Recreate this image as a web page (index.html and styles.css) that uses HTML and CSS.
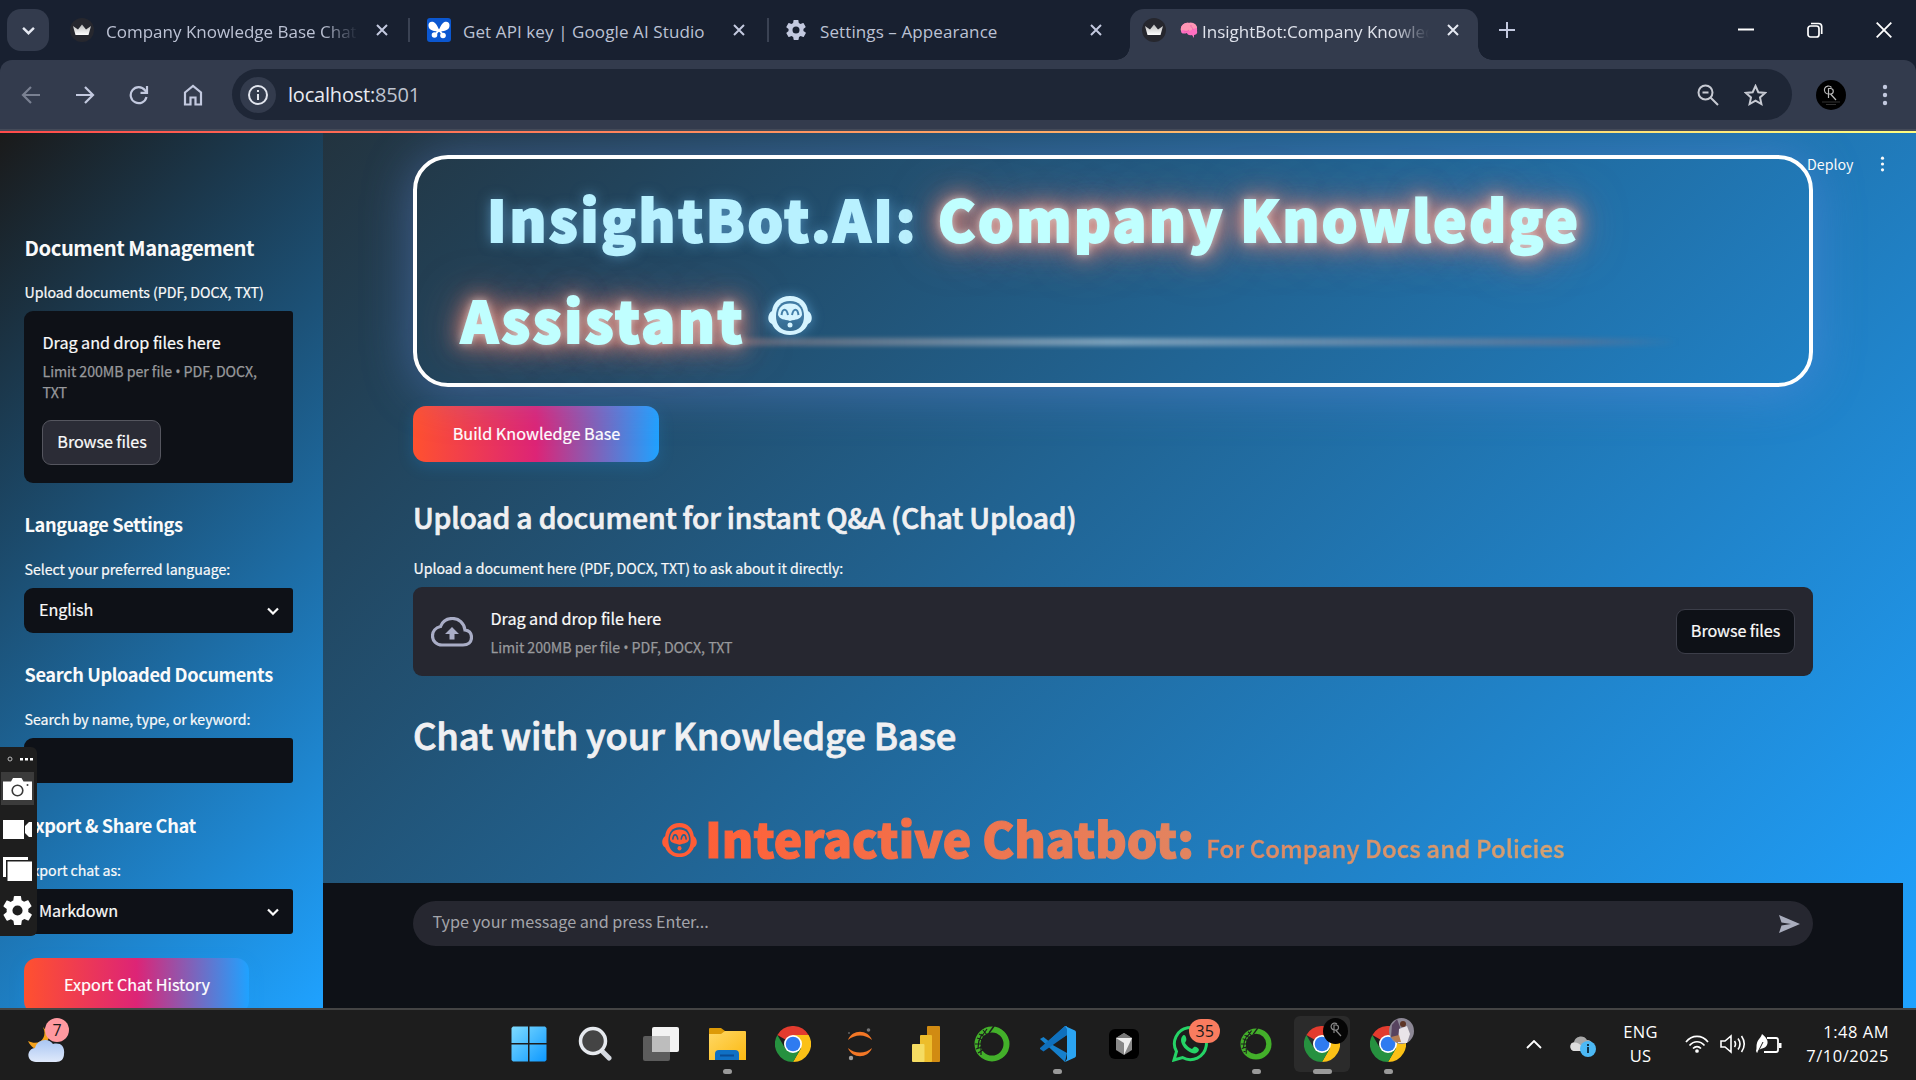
FILE: index.html
```html
<!DOCTYPE html>
<html lang="en">
<head>
<meta charset="utf-8">
<title>InsightBot: Company Knowledge Assistant</title>
<link rel="stylesheet" href="styles.css">
</head>
<body>
<svg class="defs" width="0" height="0" aria-hidden="true">
  <defs>
    <linearGradient id="gWin" x1="0" y1="0" x2="1" y2="1"><stop offset="0" stop-color="#7fdcff"/><stop offset="1" stop-color="#0d98ff"/></linearGradient>
    <linearGradient id="gFold" x1="0" y1="0" x2="1" y2="1"><stop offset="0" stop-color="#ffd865"/><stop offset="1" stop-color="#fcb911"/></linearGradient>
    <linearGradient id="gCloud" x1="0" y1="0" x2="0" y2="1"><stop offset="0" stop-color="#a9c6f3"/><stop offset="1" stop-color="#dfe9fb"/></linearGradient>
    <linearGradient id="gCrown" x1="0" y1="0" x2="0" y2="1"><stop offset="0" stop-color="#b9b9b9"/><stop offset="1" stop-color="#ffffff"/></linearGradient>
    <mask id="face">
      <path d="M22 0C33 0 39 7 40 15C45 18 45 26 40 28C37 35 30 39 22 39S7 35 4 28C-1 26-1 18 4 15C5 7 11 0 22 0Z" fill="#fff"/>
      <path d="M22 5C31 5 36 11 36 20S31 35 22 35S8 29 8 20S13 5 22 5Z" fill="#000"/>
      <path d="M22 7.500C30 7.500 34 12 34 19C32 24 28 23 22 25C16 23 12 24 10 19C10 12 14 7.500 22 7.500Z" fill="#fff"/>
      <path d="M13.500 19C14.500 12 18.500 12 20 19M24 19C25.500 12 29.500 12 30.500 19" fill="none" stroke="#000" stroke-width="2"/>
      <circle cx="22" cy="29" r="2.500" fill="#fff"/>
    </mask>
    <symbol id="monkey" viewBox="0 0 44 39"><rect width="44" height="39" fill="currentColor" mask="url(#face)"/></symbol>
    <symbol id="crown" viewBox="0 0 24 24"><circle cx="12" cy="12" r="12" fill="#26272e"/><path d="M3 8L8 11.500L12 6.500L16 11.500L21 8L18.500 17H5.500Z" fill="url(#gCrown)"/></symbol>
    <symbol id="x" viewBox="0 0 12 12"><path d="M1 1L11 11M11 1L1 11" stroke="currentColor" stroke-width="2" fill="none"/></symbol>
    <symbol id="gear" viewBox="2 2 20 20"><path fill="currentColor" fill-rule="evenodd" d="M19.400 13c0-.300.100-.600.100-1s0-.700-.100-1l2.100-1.700c.200-.100.300-.400.100-.600l-2-3.500c-.100-.200-.400-.300-.600-.200l-2.500 1c-.500-.400-1.100-.700-1.700-1l-.400-2.600C14.500 2.200 14.200 2 14 2h-4c-.300 0-.500.200-.500.400l-.400 2.700c-.600.200-1.100.600-1.700 1L5 5.100c-.200-.100-.500 0-.600.200l-2 3.500c-.100.200-.100.500.100.600L4.600 11c0 .300-.100.700-.100 1s0 .700.100 1l-2.100 1.700c-.200.100-.300.400-.100.600l2 3.500c.100.200.400.300.600.200l2.500-1c.500.400 1.100.700 1.700 1l.400 2.600c0 .200.200.400.500.400h4c.300 0 .500-.200.500-.400l.400-2.700c.600-.200 1.100-.600 1.700-1l2.500 1c.200.100.500 0 .600-.200l2-3.500c.100-.200.100-.500-.100-.600zM12 15.500a3.500 3.500 0 1 1 0-7a3.500 3.500 0 0 1 0 7z"/></symbol>
    <symbol id="dots" viewBox="0 0 6 22"><circle cx="3" cy="3" r="2.200" fill="currentColor"/><circle cx="3" cy="11" r="2.200" fill="currentColor"/><circle cx="3" cy="19" r="2.200" fill="currentColor"/></symbol>
    <symbol id="chev" viewBox="0 0 12 8"><path d="M1 1.500L6 6.500L11 1.500" fill="none" stroke="currentColor" stroke-width="2.200"/></symbol>
    <symbol id="chrome" viewBox="0 0 36 36">
      <path d="M18 18L2.400 9A18 18 0 0 1 33.600 9Z" fill="#e33b2e"/>
      <path d="M18 9H33.600A18 18 0 0 1 18 36L25.800 22.500Z" fill="#fbc116"/>
      <path d="M2.400 9L10.200 22.500L25.800 22.500L18 36A18 18 0 0 1 2.400 9Z" fill="#26913f"/>
      <circle cx="18" cy="18" r="9" fill="#fff"/><circle cx="18" cy="18" r="7.300" fill="#2f7bf0"/>
    </symbol>
    <symbol id="conda" viewBox="0 0 36 36"><circle cx="18" cy="18" r="14.500" fill="none" stroke="#43b02a" stroke-width="6"/><path d="M3 12L9 14M5 8L11 11M9 4L13 9M1 18L7 18M2 23L8 21M4 27L9 24M8 8L5 15M13 3L8 10M5 14L4 22M7 20L7 29" stroke="#1d1d1d" stroke-width="1.200"/><path d="M20 0L15 7" stroke="#1d1d1d" stroke-width="1.500"/></symbol>
  </defs>
</svg>

<header class="tabs">
  <div class="tabsearch"><svg width="13" height="9"><use href="#chev"/></svg></div>
  <div class="tab t1"><svg class="fav" width="24" height="24"><use href="#crown"/></svg><span class="title fade ui">Company Knowledge Base Chat</span><svg class="cl" width="12" height="12"><use href="#x"/></svg></div>
  <div class="tab t2"><svg class="fav" width="24" height="24" viewBox="0 0 24 24"><rect width="24" height="24" rx="3" fill="#0b57d0"/><path d="M12 14C8 13 2 13 1.500 8C1 3 6 3 8 5C10 7 11 9 12 12C13 9 14 7 16 5C18 3 23 3 22.500 8C22 13 16 13 12 14Z" fill="#fff"/><circle cx="7.500" cy="17" r="2.800" fill="#fff"/><circle cx="16" cy="17.500" r="2.800" fill="#fff"/><path d="M8 17L12 12L16 17" fill="none" stroke="#fff" stroke-width="2"/></svg><span class="title ui">Get API key | Google AI Studio</span><svg class="cl" width="12" height="12"><use href="#x"/></svg></div>
  <div class="tab t3"><svg class="fav" width="20" height="20"><use href="#gear"/></svg><span class="title ui">Settings – Appearance</span><svg class="cl" width="12" height="12"><use href="#x"/></svg></div>
  <div class="tab t4"><svg class="fav" width="24" height="24"><use href="#crown"/></svg>
    <svg class="brain" width="18" height="17" viewBox="0 0 18 17"><path d="M1 9C0 4 4 0 9 1C14 0 18 4 17 9C18 12 15 13 14 13L14 16L12 13C9 14 7 12 7 11C4 12 1 12 1 9Z" fill="#ff6fc0"/><path d="M1 9C0 4 4 0 9 1C14 0 17 3 17 6C13 6 12 9 8 9S4 7 1 9Z" fill="#ff96b4"/><path d="M11 3C10 5 13 5 13 8M4 10C6 9 7 10 9 8" fill="none" stroke="#ee5cb0" stroke-width=".8"/></svg>
    <span class="title fade ui">InsightBot:Company Knowledge</span><svg class="cl" width="12" height="12"><use href="#x"/></svg></div>
  <svg class="plus" width="16" height="16" viewBox="0 0 16 16"><path d="M8 0V16M0 8H16" stroke="#c3c9df" stroke-width="2"/></svg>
  <div class="winctl">
    <svg width="16" height="16" viewBox="0 0 16 16"><path d="M0 7.500H16" stroke="#fff" stroke-width="2"/></svg>
    <svg width="16" height="16" viewBox="0 0 16 16" fill="none" stroke="#fff" stroke-width="1.700"><rect x="1" y="4" width="11" height="11" rx="2.500"/><path d="M4 1.500H11.500C14 1.500 14.700 3 14.700 4.500V12"/></svg>
    <svg width="16" height="16" viewBox="0 0 16 16"><path d="M.7 .7L15.300 15.300M15.300 .7L.7 15.300" stroke="#fff" stroke-width="1.800"/></svg>
  </div>
</header>

<div class="toolbarwrap"><div class="toolbar">
  <svg class="nav dim" viewBox="0 0 20 20"><path d="M19 10H2M10 2L2 10L10 18"/></svg>
  <svg class="nav" viewBox="0 0 20 20"><path d="M1 10H18M10 2L18 10L10 18"/></svg>
  <svg class="nav" viewBox="0 0 20 20"><path d="M17.500 12A8 8 0 1 1 16 5.200L18 7.500M18 1V7.800H11.500"/></svg>
  <svg class="nav" viewBox="0 0 20 22"><path d="M2 8.500L10 2L18 8.500V20.500H12.500V13.500H7.500V20.500H2Z"/></svg>
  <div class="omni">
    <div class="info"><svg width="20" height="20" viewBox="0 0 20 20"><circle cx="10" cy="10" r="9" fill="none" stroke="#e2e5ee" stroke-width="2"/><path d="M10 9V15M10 5V7" stroke="#e2e5ee" stroke-width="2"/></svg></div>
    <span class="url ui">localhost:<i>8501</i></span>
    <svg class="mag" width="22" height="22" viewBox="0 0 22 22" fill="none" stroke="#c7cad3" stroke-width="2"><circle cx="8.500" cy="8.500" r="7"/><path d="M5.500 8.500H11.500M13.500 13.500L21 21"/></svg>
    <svg class="star" width="23" height="22" viewBox="0 0 23 22"><path d="M11.500 2L14.300 8.200L21 8.900L16 13.400L17.400 20L11.500 16.600L5.600 20L7 13.400L2 8.900L8.700 8.200Z" fill="none" stroke="#c7cad3" stroke-width="2"/></svg>
  </div>
  <svg class="avatar" width="30" height="30" viewBox="0 0 30 30"><circle cx="15" cy="15" r="15" fill="#000"/><path d="M15.500 7.500A4 4 0 1 0 12.500 14M12.500 18V8.500H15A2.800 2.800 0 0 1 15 14H12.500M14.500 14L20 20" fill="none" stroke="#bbb" stroke-width="1.200"/><path d="M6 22H24M10 24.500H20" stroke="#333" stroke-width="1"/></svg>
  <svg class="menu" width="6" height="22"><use href="#dots"/></svg>
</div></div>

<div class="app">
  <div class="deco"></div>
  <aside class="side">
    <h2 class="h-a">Document Management</h2>
    <p class="lab">Upload documents (PDF, DOCX, TXT)</p>
    <div class="drop">
      <div class="drag">Drag and drop files here</div>
      <div class="limit">Limit 200MB per file <i>•</i> PDF, DOCX,<br>TXT</div>
      <button class="browse">Browse files</button>
    </div>
    <h3 class="h-b">Language Settings</h3>
    <p class="lab">Select your preferred language:</p>
    <div class="field"><span>English</span><svg width="12" height="8"><use href="#chev"/></svg></div>
    <h3 class="h-b">Search Uploaded Documents</h3>
    <p class="lab">Search by name, type, or keyword:</p>
    <div class="field"></div>
    <h3 class="h-b last">Export &amp; Share Chat</h3>
    <p class="lab">Export chat as:</p>
    <div class="field"><span>Markdown</span><svg width="12" height="8"><use href="#chev"/></svg></div>
    <button class="grad exp">Export Chat History</button>
  </aside>
  <main class="main">
    <div class="scroll">
      <div class="hero">
        <div class="shine"></div>
        <h1><span class="ib">InsightBot.AI:</span><span class="ck">Company Knowledge</span><br><span class="ck as">Assistant</span><svg class="bot" width="44" height="39"><use href="#monkey"/></svg></h1>
      </div>
      <button class="grad build">Build Knowledge Base</button>
      <h3 class="up">Upload a document for instant Q&amp;A (Chat Upload)</h3>
      <p class="lab">Upload a document here (PDF, DOCX, TXT) to ask about it directly:</p>
      <div class="bigdrop">
        <svg class="cloud" width="42" height="30" viewBox="0 0 42 30"><path d="M11 28H32C37 28 40.500 25 40.500 20.500C40.500 16 37.500 13.500 34 13C33 6 28 1.500 21.500 1.500C16 1.500 11.500 4.500 9.500 9.500C4.500 10.500 1.500 14.500 1.500 19C1.500 24 5.500 28 11 28Z" fill="none" stroke="#a9adc6" stroke-width="3.200"/><path d="M21 10L28 17H23.500V22.500H18.500V17H14Z" fill="#a9adc6"/></svg>
        <div class="dt"><div class="drag">Drag and drop file here</div><div class="limit">Limit 200MB per file <i>•</i> PDF, DOCX, TXT</div></div>
        <button class="browse dark">Browse files</button>
      </div>
      <h2 class="chat">Chat with your Knowledge Base</h2>
      <div class="inter"><svg width="35" height="34" viewBox="0 0 44 39" preserveAspectRatio="none"><use href="#monkey" width="44" height="39"/></svg><div class="it"><b>Interactive Chatbot:</b><span>For Company Docs and Policies</span></div></div>
    </div>
    <div class="bottom"><div class="msg"><span>Type your message and press Enter...</span><svg width="21" height="18" viewBox="0 0 21 18"><path d="M0 0L21 9L0 18L2.500 10.500L12 9L2.500 7.500Z" fill="#a9adbd"/></svg></div></div>
  </main>
  <div class="deploy"><span>Deploy</span><svg width="5" height="16"><use href="#dots"/></svg></div>
  <div class="recorder">
    <svg class="grip" width="28" height="8" viewBox="0 0 28 8"><circle cx="5" cy="4" r="2" fill="none" stroke="#bbb"/><path d="M15 3h3v2.500h-3zM20 3h3v2.500h-3zM25 3h3v2.500h-3z" fill="#fff"/></svg>
    <div class="cam"><svg width="29" height="22" viewBox="0 0 29 22"><path d="M0 3.500H8L10 0H18.500L20.500 3.500H29V22H0Z" fill="#fff"/><circle cx="14.500" cy="12.500" r="5.300" fill="none" stroke="#3a3a3a" stroke-width="1.600"/><circle cx="24.500" cy="7" r="1" fill="#3a3a3a"/></svg></div>
    <svg class="vid" width="29" height="19" viewBox="0 0 29 19"><path d="M0 0H21V7L26 2H29V17H26L21 12V19H0Z" fill="#fff"/><path d="M21.500 0V19" stroke="#1e1e1e"/></svg>
    <svg class="lay" width="29" height="24" viewBox="0 0 29 24"><path d="M0 0H25V3H3V20H0Z" fill="#fff"/><rect x="4.500" y="4.500" width="24.500" height="19.500" fill="#fff"/></svg>
    <svg class="set" width="29" height="29"><use href="#gear"/></svg>
  </div>
</div>

<footer class="task">
  <div class="weather"><svg width="37" height="36" viewBox="0 0 37 36"><path d="M15 0C20 10 12 20 0 14C4 22 10 24 16 22L22 8Z" fill="#f5a21b"/><path d="M8 35C-2 35-2 22 7 21C9 13 20 10 25 17C33 15 37 20 36 27C36 32 33 35 28 35Z" fill="url(#gCloud)"/></svg><span class="badge pink">7</span></div>
  <div class="apps">
    <div class="slot"><svg width="36" height="36" viewBox="0 0 36 36"><path d="M2 .5H17V17H.5V2ZM18.500 .5H34L35.500 2V17H18.500ZM.5 18.500H17V35.500H2L.5 34ZM18.500 18.500H35.500V34L34 35.500H18.500Z" fill="url(#gWin)"/></svg></div>
    <div class="slot"><svg width="34" height="36" viewBox="0 0 34 36"><path d="M23 24L31 32" stroke="#d4d8df" stroke-width="5" stroke-linecap="round"/><circle cx="15" cy="15" r="12.500" fill="#444" stroke="#e6e9ee" stroke-width="3.500"/></svg></div>
    <div class="slot"><svg width="36" height="36" viewBox="0 0 36 36"><rect x="0" y="10" width="27" height="25" rx="2" fill="#5c5c5c"/><rect x="9" y="1" width="27" height="25" rx="2" fill="#f3f3f3"/><path d="M9 10H27V26H9Z" fill="#bdbdbd"/></svg></div>
    <div class="slot"><svg width="37" height="34" viewBox="0 0 37 34"><path d="M0 2Q0 1 1 1H12L16 4V8H0Z" fill="#dd9a07"/><path d="M0 7H12L16 4H36Q37 4 37 5V33H0Z" fill="url(#gFold)"/><path d="M6 33V27Q6 23 10 23H26Q30 23 30 27V33Z" fill="#0f70c4"/><path d="M11 28.500H25" stroke="#0a4c94" stroke-width="2"/></svg><i class="ind"></i></div>
    <div class="slot"><svg width="36" height="36"><use href="#chrome"/></svg></div>
    <div class="slot"><svg width="28" height="36" viewBox="0 0 28 36"><path d="M2 14C6 3 22 3 26 14C19 8 9 8 2 14ZM2 22C6 33 22 33 26 22C19 28 9 28 2 22Z" fill="#f37726"/><circle cx="22.500" cy="4" r="1.800" fill="#767677"/><circle cx="3" cy="7" r="1" fill="#616262"/><circle cx="5" cy="32" r="2.200" fill="#9e9e9e"/></svg></div>
    <div class="slot"><svg width="28" height="36" viewBox="0 0 28 36"><rect x="15" y="0" width="13" height="36" rx="1" fill="#d18b12"/><rect x="8" y="9" width="12" height="27" rx="1" fill="#edbd2c"/><rect x="0" y="18" width="12.500" height="18" rx="1" fill="#f5dc62"/></svg></div>
    <div class="slot"><svg width="36" height="36"><use href="#conda"/></svg></div>
    <div class="slot"><svg width="36" height="36" viewBox="0 0 36 36"><path d="M25 0L8.500 15L3.500 11L0 13L25 36L27 27L11 18L27 9Z" fill="#1680cc"/><path d="M0 23L3.500 25.500L27 9V0H25L0 22Z" fill="#0f70bd"/><path d="M25 0L35 4.500Q36 5 36 6.500V29.500Q36 31 35 31.500L25 36L27 33V3Z" fill="#2ba4f2"/></svg><i class="ind"></i></div>
    <div class="slot"><svg width="30" height="30" viewBox="0 0 30 30"><rect width="30" height="30" rx="6" fill="#000"/><path d="M15 4L23 9V21L15 26L7 21V9Z" fill="#888"/><path d="M7 9H23L15 26V14Z" fill="#eee"/><path d="M15 4L23 9H7Z" fill="#777"/></svg></div>
    <div class="slot"><svg width="36" height="36" viewBox="0 0 36 36"><path d="M2 34L4.500 25.500A16 16 0 1 1 10.500 31.500Z" fill="#1d1d1d" stroke="#25d366" stroke-width="3"/><path d="M12 9C14 9 15 14 14 15L13 17C15 20 17 22 20 23L22 21C23 20 27 22 27 24C26 27 23 28 20 27C14 25 9 19 9 14C9 11 11 9 12 9Z" fill="#25d366"/></svg><span class="badge b35">35</span></div>
    <div class="slot"><svg width="32" height="32"><use href="#conda"/></svg><i class="ind"></i></div>
    <div class="slot"><div class="active"></div><svg width="36" height="36"><use href="#chrome"/></svg><svg class="av" width="25" height="26" viewBox="0 0 25 26"><ellipse cx="12.500" cy="13" rx="12.500" ry="13" fill="#050505"/><path d="M14 6A3.500 3.500 0 1 0 11 12M11 15V7H13A2.500 2.500 0 0 1 13 12H11M12.500 12L18 18" fill="none" stroke="#888" stroke-width="1.200"/></svg><i class="ind wide"></i></div>
    <div class="slot"><svg width="36" height="36"><use href="#chrome"/></svg><svg class="av" width="25" height="26" viewBox="0 0 25 26"><ellipse cx="12.500" cy="13" rx="12.500" ry="13" fill="#8d8896"/><path d="M3 7L8 1L11 9L9 23L2 19Z" fill="#57435f"/><path d="M10 11L18 8L21 16L18 25L9 25Z" fill="#e9e4e9"/><circle cx="14" cy="6" r="3" fill="#5d3526"/><path d="M2 19L10 17L12 24L7 24Z" fill="#b47c53"/></svg><i class="ind"></i></div>
  </div>
  <div class="tray">
    <svg class="up1" width="16" height="9" viewBox="0 0 16 9"><path d="M1 8L8 1L15 8" fill="none" stroke="#fff" stroke-width="1.800"/></svg>
    <svg class="onedrive" width="26" height="22" viewBox="0 0 26 22"><path d="M5 16C-1 16-1 8 4 7C5 1 14-1 17 5C21 5 23 8 22 12V16Z" fill="#a8a8a8"/><path d="M2 8C8 6 12 10 14 16H5C-1 16 0 9 2 8Z" fill="#dedede"/><circle cx="18" cy="14" r="8" fill="#4cb9f5"/><path d="M18 12V18M18 9V11" stroke="#10344a" stroke-width="2"/></svg>
    <div class="lang ui">ENG<br>US</div>
    <svg class="wifi" width="24" height="18" viewBox="0 0 24 18" fill="none" stroke="#fff" stroke-width="1.700"><path d="M1 7C7-.5 17-.5 23 7M4.500 10.500C9 5.500 15 5.500 19.500 10.500M8 13.500C10.500 11 13.500 11 16 13.500"/><circle cx="12" cy="16" r="1" fill="#fff"/></svg>
    <svg class="vol" width="26" height="20" viewBox="0 0 26 20" fill="none" stroke="#fff" stroke-width="1.600"><path d="M1 7H5L11 2V18L5 13H1ZM14.500 7Q16.500 10 14.500 13M18 4.500Q22 10 18 15.500M21.500 2Q27 10 21.500 18"/></svg>
    <svg class="bat" width="26" height="20" viewBox="0 0 26 20"><path d="M11 4H20Q22 4 22 6V16Q22 18 20 18H8" fill="none" stroke="#fff" stroke-width="1.800"/><path d="M23 9H25.500V14H23Z" fill="#fff"/><path d="M6 0C10 3 13 7 11 11C9 15 5 14 3 16L1 19L0 17C1 14 0 12 1 9C2 5 5 4 6 0Z" fill="#fff"/><path d="M2 18L7 8" stroke="#1d1d1d"/></svg>
    <div class="clock ui">1:48 AM<br>7/10/2025</div>
  </div>
</footer>
</body>
</html>
```
FILE: styles.css
```css
* { box-sizing: border-box; }
body { margin: 0; width: 1916px; height: 1080px; overflow: hidden; background: #182030; font-family: "Noto Sans CJK SC", "Noto Sans", sans-serif; color: #fafafa; }
h1, h2, h3, p { margin: 0; white-space: nowrap; }
svg { display: block; flex: none; }
button { border: 0; padding: 0; font: inherit; color: inherit; display: flex; align-items: center; justify-content: center; }
.defs { position: absolute; }
.ui { font-family: "Open Sans", "Noto Sans", sans-serif; white-space: nowrap; }

/* Browser tabs */
.tabs { height: 60px; display: flex; align-items: center; padding-left: 7px; background: #182030; color: #c3c9df; }
.tabsearch { width: 42px; height: 42px; border-radius: 14px; background: #333b4d; display: flex; align-items: center; justify-content: center; margin-right: 9px; }
.tabsearch svg { color: #e6e9f2; }
.tab { height: 51px; margin-top: 9px; display: flex; align-items: center; padding: 0 22px 9px 12px; position: relative; font-size: 17px; line-height: 24px; }
.tab .fav { margin-right: 12px; }
.tab .title { flex: 1; width: 0; overflow: hidden; color: #bcc2d4; margin-top: 3px; letter-spacing: .1px; }
.fade { mask-image: linear-gradient(90deg, #000 calc(100% - 36px), transparent); }
.t1 { width: 352px; }
.tab.t1 .title { flex: none; width: 252px; margin-right: 18px; letter-spacing: 0; }
.t2 { width: 359px; padding: 0 24px 9px 17px; }
.t3 { width: 361px; padding: 0 28px 9px 17px; }
.t1::after, .t2::after { content: ""; position: absolute; right: 0; top: 9px; width: 2px; height: 24px; background: #3a4253; }
.t3 .fav { margin: 0 14px 0 0; }
.t4 { width: 348px; background: #333b4d; border-radius: 14px 14px 0 0; color: #e6e9f2; padding: 0 18px 9px 12px; }
.tab.t4 .title { flex: none; width: 227px; color: #e0e3ec; margin-right: 18px; letter-spacing: 0; }
.t4 .fav { margin-right: 14px; }
.brain { margin-right: 4px; }
.t4::before, .t4::after { content: ""; position: absolute; bottom: 0; width: 14px; height: 14px; }
.t4::before { left: -14px; background: radial-gradient(circle at 0 0, transparent 13.500px, #333b4d 14px); }
.t4::after { right: -14px; background: radial-gradient(circle at 100% 0, transparent 13.500px, #333b4d 14px); }
.plus { margin-left: 21px; }
.winctl { margin-left: auto; display: flex; gap: 53px; padding-right: 24px; }

/* Address bar */
.toolbarwrap { background: #182030; }
.toolbar { height: 71px; background: #333b4d; border-radius: 12px 12px 0 0; border-bottom: 2px solid #444a58; display: flex; align-items: center; padding-left: 21px; }
.nav { width: 20px; height: 22px; margin-right: 34px; fill: none; stroke: #c3c9df; stroke-width: 2.200; }
.nav.dim { stroke: #7a8192; }
.omni { width: 1560px; height: 51px; border-radius: 26px; background: #1e2636; display: flex; align-items: center; margin: 0 24px 0 -5px; padding: 0 25px 0 8px; }
.info { width: 36px; height: 36px; border-radius: 50%; background: #333b4d; display: flex; align-items: center; justify-content: center; margin-right: 12px; }
.url { font-size: 20px; line-height: 28px; color: #e9ebf2; letter-spacing: -.2px; }
.url i { font-style: normal; color: #bfc3cf; }
.mag { margin-left: auto; margin-right: 25px; }
.menu { margin-left: 36px; color: #c3c9df; }

/* App */
.app { position: relative; height: 877px; display: flex; overflow: hidden; background: linear-gradient(135deg, #232526 0%, #1fa2ff 100%); }
.deco { position: absolute; left: 0; top: 0; width: 100%; height: 2px; background: linear-gradient(90deg, #ff4b4b, #fffd80); z-index: 3; }
.side { width: 323px; height: 877px; padding: 101px 30px 0 24px; background: linear-gradient(135deg, #1a1a1a 0%, #1fa2ff 100%); flex: none; overflow: hidden; }
.h-a { height: 30px; line-height: 32px; font-size: 20.250px; font-weight: 600; margin-bottom: 20px; letter-spacing: -.47px; padding-left: .5px; }
.h-b { height: 26px; line-height: 27px; font-size: 18.200px; font-weight: 600; margin: 28px 0 22px; letter-spacing: -.4px; padding-left: .5px; }
.h-b.last { margin-top: 29px; }
.lab { height: 20px; line-height: 21px; font-size: 14.200px; margin-bottom: 9px; padding-left: .5px; white-space: nowrap; letter-spacing: -.04px; -webkit-text-stroke: .2px; }
.drop { height: 172px; background: #0e1117; border-radius: 9px 3px 3px 9px; padding: 20px 19px 0 18.500px; }
.drag { height: 22px; line-height: 22px; font-size: 16.200px; white-space: nowrap; letter-spacing: -.05px; -webkit-text-stroke: .2px; }
.limit { line-height: 20px; font-size: 14.200px; margin-top: 8px; color: #98999c; white-space: nowrap; letter-spacing: -.05px; -webkit-text-stroke: .25px; }
.limit i { font-family: "Open Sans", sans-serif; font-style: normal; }
.browse { width: 119px; height: 45px; margin: 18px 0 0 -.5px; padding: 0 0 3px 1px; border: 1px solid #55565f; border-radius: 9px; background: #2b2c36; font-size: 16.200px; letter-spacing: -.1px; -webkit-text-stroke: .2px; }
.field { height: 45px; background: #0e1117; border-radius: 9px 3px 3px 9px; display: flex; align-items: center; justify-content: space-between; padding: 0 14px 0 15px; font-size: 16.200px; letter-spacing: -.1px; -webkit-text-stroke: .2px; }
.field span { margin-bottom: 3px; }
.grad { height: 56px; padding: 0 0 3px 1px; border-radius: 13px; background: linear-gradient(90deg, #ff512f, #dd2476 50%, #1fa2ff); box-shadow: 0 4px 16px rgba(31, 162, 255, .2); font-size: 16.200px; color: #fff; -webkit-text-stroke: .2px; }
.exp { width: 225px; margin-top: 24px; padding-bottom: 5px; }

.main { width: 1580px; display: flex; flex-direction: column; }
.scroll { height: 752px; padding: 24px 90px 0; width: 1593px; overflow: hidden; }
.hero { position: relative; width: 1400px; height: 232px; border: 4px solid #fff; border-radius: 35px; box-shadow: 0 4px 50px rgba(110, 145, 235, .42); padding: 8px 0 0 44px; }
.hero h1 { position: relative; font-size: 56px; line-height: 101px; font-weight: 900; letter-spacing: 2.550px; -webkit-text-stroke: 2px; }
.ib { margin-left: 26px; margin-right: 20px; letter-spacing: 2.800px; color: #b8f1ff; text-shadow: 0 0 14px rgba(120, 200, 255, .6); }
.ck { color: #c0ffff; text-shadow: 0 0 9px rgba(225, 230, 230, .8), 0 0 20px rgba(245, 140, 120, .9), 0 0 28px rgba(240, 135, 115, .9), 0 0 50px rgba(230, 130, 120, .75); }
.as { letter-spacing: 2.750px; }
.bot { display: inline-block; color: #d5f4ff; margin-left: 23px; vertical-align: 8px; filter: drop-shadow(0 0 6px rgba(120, 200, 255, .6)); }
.shine { position: absolute; left: 130px; right: 130px; bottom: 37px; height: 8px; filter: blur(2px); background: linear-gradient(90deg, transparent, rgba(255, 120, 90, .2) 10%, rgba(255, 255, 255, .4) 50%, rgba(255, 120, 90, .2) 90%, transparent); }
.build { width: 246px; margin-top: 19px; }
.up { height: 40px; line-height: 40px; font-size: 28.350px; font-weight: 500; margin: 35px 0 21px; color: #f0f0f2; letter-spacing: -.18px; -webkit-text-stroke: .7px; }
.bigdrop { width: 1400px; height: 89px; border-radius: 9px; background: #262730; display: flex; align-items: center; padding: 0 18px; }
.dt { margin: 1px 0 0 17.500px; flex: 1; }
.bigdrop .limit { margin-top: 8px; }
.dark { background: #0e1117; margin: 0; border-color: #3c3e49; padding-left: 0; }
.chat { height: 50px; line-height: 50px; font-size: 36.400px; font-weight: 500; margin: 33px 0 48px; color: #f0f0f2; letter-spacing: -.18px; -webkit-text-stroke: .8px; }
.inter { height: 60px; display: flex; align-items: center; padding-left: 249px; color: #ff5c36; }
.inter svg { margin-top: 6px; }
.it { margin-left: 8px; margin-top: 14px; white-space: nowrap; line-height: 60px; background: linear-gradient(90deg, #ff6038, #e28460 56%, #d3a172); background-clip: text; color: transparent; }
.it b { font-size: 48px; font-weight: 900; margin-right: 12px; letter-spacing: 0; -webkit-text-stroke: 1.200px transparent; }
.it span { font-size: 24px; font-weight: 500; letter-spacing: .07px; -webkit-text-stroke: .4px transparent; }
.bottom { height: 125px; background: #0e1117; padding: 18px 90px 0; }
.msg { height: 45px; border-radius: 23px; background: #262730; display: flex; align-items: center; justify-content: space-between; padding: 0 13px 0 19.500px; font-size: 16.200px; letter-spacing: -.03px; color: #a3a4aa; }
.msg span { margin-bottom: 5px; }
.deploy { position: absolute; right: 31.500px; top: 22px; display: flex; align-items: center; gap: 26px; font-size: 14.200px; line-height: 22px; }

/* Floating capture toolbar */
.recorder { position: absolute; left: 0; top: 616px; width: 37px; height: 189px; background: #1e1e1e; border-radius: 0 6px 6px 0; padding-left: 3px; color: #fff; }
.grip { margin: 8px 0 0 2px; }
.cam { width: 33px; height: 33px; margin: 9px 0 15px -2px; background: #3b3b3b; display: flex; align-items: center; justify-content: center; }
.lay { margin: 18px 0 15px; }

/* Taskbar */
.task { height: 72px; background: #1d1d1d; border-top: 2px solid #444; display: flex; position: relative; }
.weather { width: 496px; padding: 17px 0 0 28px; position: relative; }
.badge { position: absolute; font: 16px/24px "Open Sans", sans-serif; color: #1a1a1a; text-align: center; border-radius: 12px; height: 24px; }
.pink { left: 45px; top: 8px; width: 24px; background: #ff99a0; }
.apps { display: flex; }
.slot { width: 66.120px; height: 68px; position: relative; display: flex; align-items: center; justify-content: center; }
.slot > svg { position: relative; }
.b35 { right: 3px; top: 9px; width: 31px; background: #fa7c5f; }
.ind { position: absolute; left: 28.500px; bottom: 4px; width: 9px; height: 5px; border-radius: 3px; background: #9a9a9a; }
.wide { left: 24px; width: 19px; }
.active { position: absolute; left: 5px; top: 6px; width: 56px; height: 56px; border-radius: 6px; background: #2b2b2b; }
.slot > .av { position: absolute; left: 34px; top: 8px; }
.tray { display: flex; align-items: center; margin-left: auto; padding-right: 27px; height: 68px; }
.tray .ui { font-size: 16.500px; line-height: 24px; color: #fff; letter-spacing: .5px; }
.onedrive { margin: 4px 27px 0 28px; }
.tray .lang { text-align: center; margin-right: 27px; width: 35px; letter-spacing: .3px; }
.wifi { margin-right: 11px; }
.vol { margin-right: 10px; }
.clock { text-align: right; margin-left: 24px; width: 83px; }
```
